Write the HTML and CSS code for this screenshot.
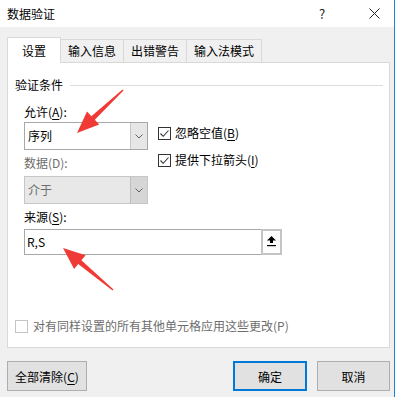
FILE: index.html
```html
<!DOCTYPE html>
<html lang="zh-CN">
<head>
  <meta charset="UTF-8" />
  <title>数据验证</title>
  <link rel="stylesheet" href="styles.css">
</head>
<body>
  <div class="dialog">
    <div class="titlebar">
      <span class="title">数据验证</span>
      <span class="help">?</span>
      <span class="close">
        <svg width="11" height="11" viewBox="0 0 11 11"><path d="M0.5 0.5 L10.5 10.5 M10.5 0.5 L0.5 10.5" stroke="#222" stroke-width="1" fill="none"/></svg>
      </span>
    </div>

    <div class="content">
      <div class="tabs">
        <div class="tab active">设置</div>
        <div class="tab">输入信息</div>
        <div class="tab">出错警告</div>
        <div class="tab">输入法模式</div>
      </div>

      <div class="panel">
        <div class="group-title">验证条件</div>

        <div class="criteria">
          <div class="col-left">
            <div class="label">允许(<u>A</u>):</div>
            <div class="combo">
              <span class="value">序列</span>
              <span class="drop"><svg width="8" height="5" viewBox="0 0 8 5"><path d="M0.5 0.5 L4 4 L7.5 0.5" stroke="#606060" fill="none"/></svg></span>
            </div>
            <div class="label disabled">数据(D):</div>
            <div class="combo disabled">
              <span class="value">介于</span>
              <span class="drop"><svg width="8" height="5" viewBox="0 0 8 5"><path d="M0.5 0.5 L4 4 L7.5 0.5" stroke="#606060" fill="none"/></svg></span>
            </div>
          </div>

          <div class="col-right">
            <div class="check">
              <span class="box"><svg width="11" height="11" viewBox="0 0 11 11"><path d="M1.5 5.5 L4.2 8.3 L9.5 2.5" stroke="#333" stroke-width="1.1" fill="none"/></svg></span>
              <span>忽略空值(<u>B</u>)</span>
            </div>
            <div class="check second">
              <span class="box"><svg width="11" height="11" viewBox="0 0 11 11"><path d="M1.5 5.5 L4.2 8.3 L9.5 2.5" stroke="#333" stroke-width="1.1" fill="none"/></svg></span>
              <span>提供下拉箭头(<u>I</u>)</span>
            </div>
          </div>
        </div>

        <div class="source">
          <div class="label">来源(<u>S</u>):</div>
          <div class="ref-input">
            <span class="value">R,S</span>
            <span class="ref-btn">
              <svg width="11" height="12" viewBox="0 0 11 12"><path d="M5.5 1 L10 5.5 L7 5.5 L7 8 L4 8 L4 5.5 L1 5.5 Z" fill="#000"/><rect x="1" y="10" width="9" height="1.2" fill="#000"/></svg>
            </span>
          </div>
        </div>

        <div class="check apply disabled">
          <span class="box"></span>
          <span>对有同样设置的所有其他单元格应用这些更改(P)</span>
        </div>
      </div>

      <div class="footer">
        <button class="btn clear">全部清除(<u>C</u>)</button>
        <button class="btn ok">确定</button>
        <button class="btn cancel">取消</button>
      </div>
    </div>

    <!-- red annotation arrows -->
    <svg class="marks" width="399" height="397" viewBox="0 0 399 397">
      <polygon fill="#ef3a35" points="77,133 99.2,124.6 94.8,119.8 123.5,90.6 122.5,89.4 91.4,116.2 87,111.4"/>
      <polygon fill="#ef3a35" points="63,248 85.6,255.3 81.4,260.2 113.5,289.4 112.5,290.6 78.2,264 74.1,269"/>
    </svg>
  </div>
</body>
</html>
```

FILE: styles.css
```css
body {
  margin: 0;
  background: #fff;
  font-family: "Noto Sans CJK SC", "Noto Sans", sans-serif;
  font-size: 12px;
  color: #000;
}
u {
  text-decoration-thickness: 1px;
  text-underline-offset: 2px;
}
.dialog {
  position: relative;
  width: 395px;
  height: 397px;
  box-sizing: border-box;
  border-right: 1px solid #1883d7;
  background: #f0f0f0;
}
.titlebar {
  height: 27px;
  background: #fff;
  display: flex;
  align-items: center;
  padding-left: 7px;
}
.title {
  flex: 1;
  line-height: 16px;
}
.help {
  width: 14px;
  margin-right: 36px;
  font-size: 13px;
  color: #222;
}
.close {
  display: flex;
  margin-right: 14px;
}
.content {
  padding: 10px 4px 0 7px;
}
.tabs {
  display: flex;
  align-items: flex-end;
}
.tab {
  height: 23px;
  line-height: 22px;
  padding: 0 7px;
  border: 1px solid #d9d9d9;
  border-bottom: none;
  margin-right: -1px;
  box-sizing: border-box;
  background: #f0f0f0;
}
.tab.active {
  position: relative;
  z-index: 1;
  height: 26px;
  line-height: 26px;
  padding: 0 14px;
  margin-bottom: -1px;
  background: #fff;
}
.panel {
  height: 286px;
  box-sizing: border-box;
  border: 1px solid #d9d9d9;
  background: #fff;
  padding: 0 6px 13px 7px;
  display: flex;
  flex-direction: column;
}
.group-title {
  margin-top: 14px;
  line-height: 16px;
  display: flex;
  align-items: center;
}
.group-title::after {
  content: "";
  flex: 1;
  height: 1px;
  background: #dcdcdc;
  margin-left: 7px;
}
.criteria {
  display: flex;
  margin-top: 11px;
  padding-left: 9px;
}
.col-left {
  width: 124px;
}
.label {
  line-height: 16px;
}
.label.disabled {
  margin-top: 5px;
  color: #6d6d6d;
}
.combo {
  display: flex;
  height: 28px;
  margin-top: 2px;
  box-sizing: border-box;
  border: 1px solid #a8a8a8;
  background: #fff;
}
.combo.disabled {
  margin-top: 5px;
  border-color: #c6c6c6;
  background: #e8e8e8;
  color: #6d6d6d;
}
.combo .value {
  flex: 1;
  line-height: 26px;
  padding-left: 3px;
}
.drop {
  width: 16px;
  display: flex;
  align-items: center;
  justify-content: center;
  background: #e6e6e6;
  border-left: 1px solid #c8c8c8;
}
.combo.disabled .drop {
  background: #d6d6d6;
  border-left-color: #bdbdbd;
}
.col-right {
  margin-left: 10px;
  padding-top: 21px;
}
.check {
  display: flex;
  align-items: center;
  gap: 4px;
  line-height: 16px;
}
.check.second {
  margin-top: 11px;
}
.box {
  width: 13px;
  height: 13px;
  box-sizing: border-box;
  border: 1px solid #333;
  background: #fff;
  display: flex;
}
.source {
  margin-top: 5px;
  padding-left: 9px;
}
.ref-input {
  display: flex;
  width: 258px;
  height: 26px;
  margin-top: 4px;
  box-sizing: border-box;
  border: 1px solid #a8a8a8;
}
.ref-input .value {
  flex: 1;
  line-height: 24px;
  padding-left: 2px;
}
.ref-btn {
  width: 21px;
  margin: -1px -1px -1px 0;
  box-sizing: border-box;
  border: 2px solid #c4c4c4;
  background: #fdfdfd;
  display: flex;
  justify-content: center;
  padding-top: 4px;
}
.check.apply {
  margin-top: auto;
  gap: 5px;
}
.check.disabled {
  color: #6d6d6d;
}
.check.disabled .box {
  border-color: #c4c4c4;
}
.footer {
  display: flex;
  margin-top: 13px;
}
.btn {
  height: 30px;
  box-sizing: border-box;
  border: 1px solid #adadad;
  background: #e1e1e1;
  font-family: inherit;
  font-size: 12px;
  color: #000;
  padding: 0;
}
.btn.clear {
  width: 80px;
}
.btn.ok {
  width: 74px;
  margin-left: auto;
  border: 2px solid #0078d7;
}
.btn.cancel {
  width: 73px;
  margin-left: 10px;
}
.marks {
  position: absolute;
  left: 0;
  top: 0;
  pointer-events: none;
}
```
